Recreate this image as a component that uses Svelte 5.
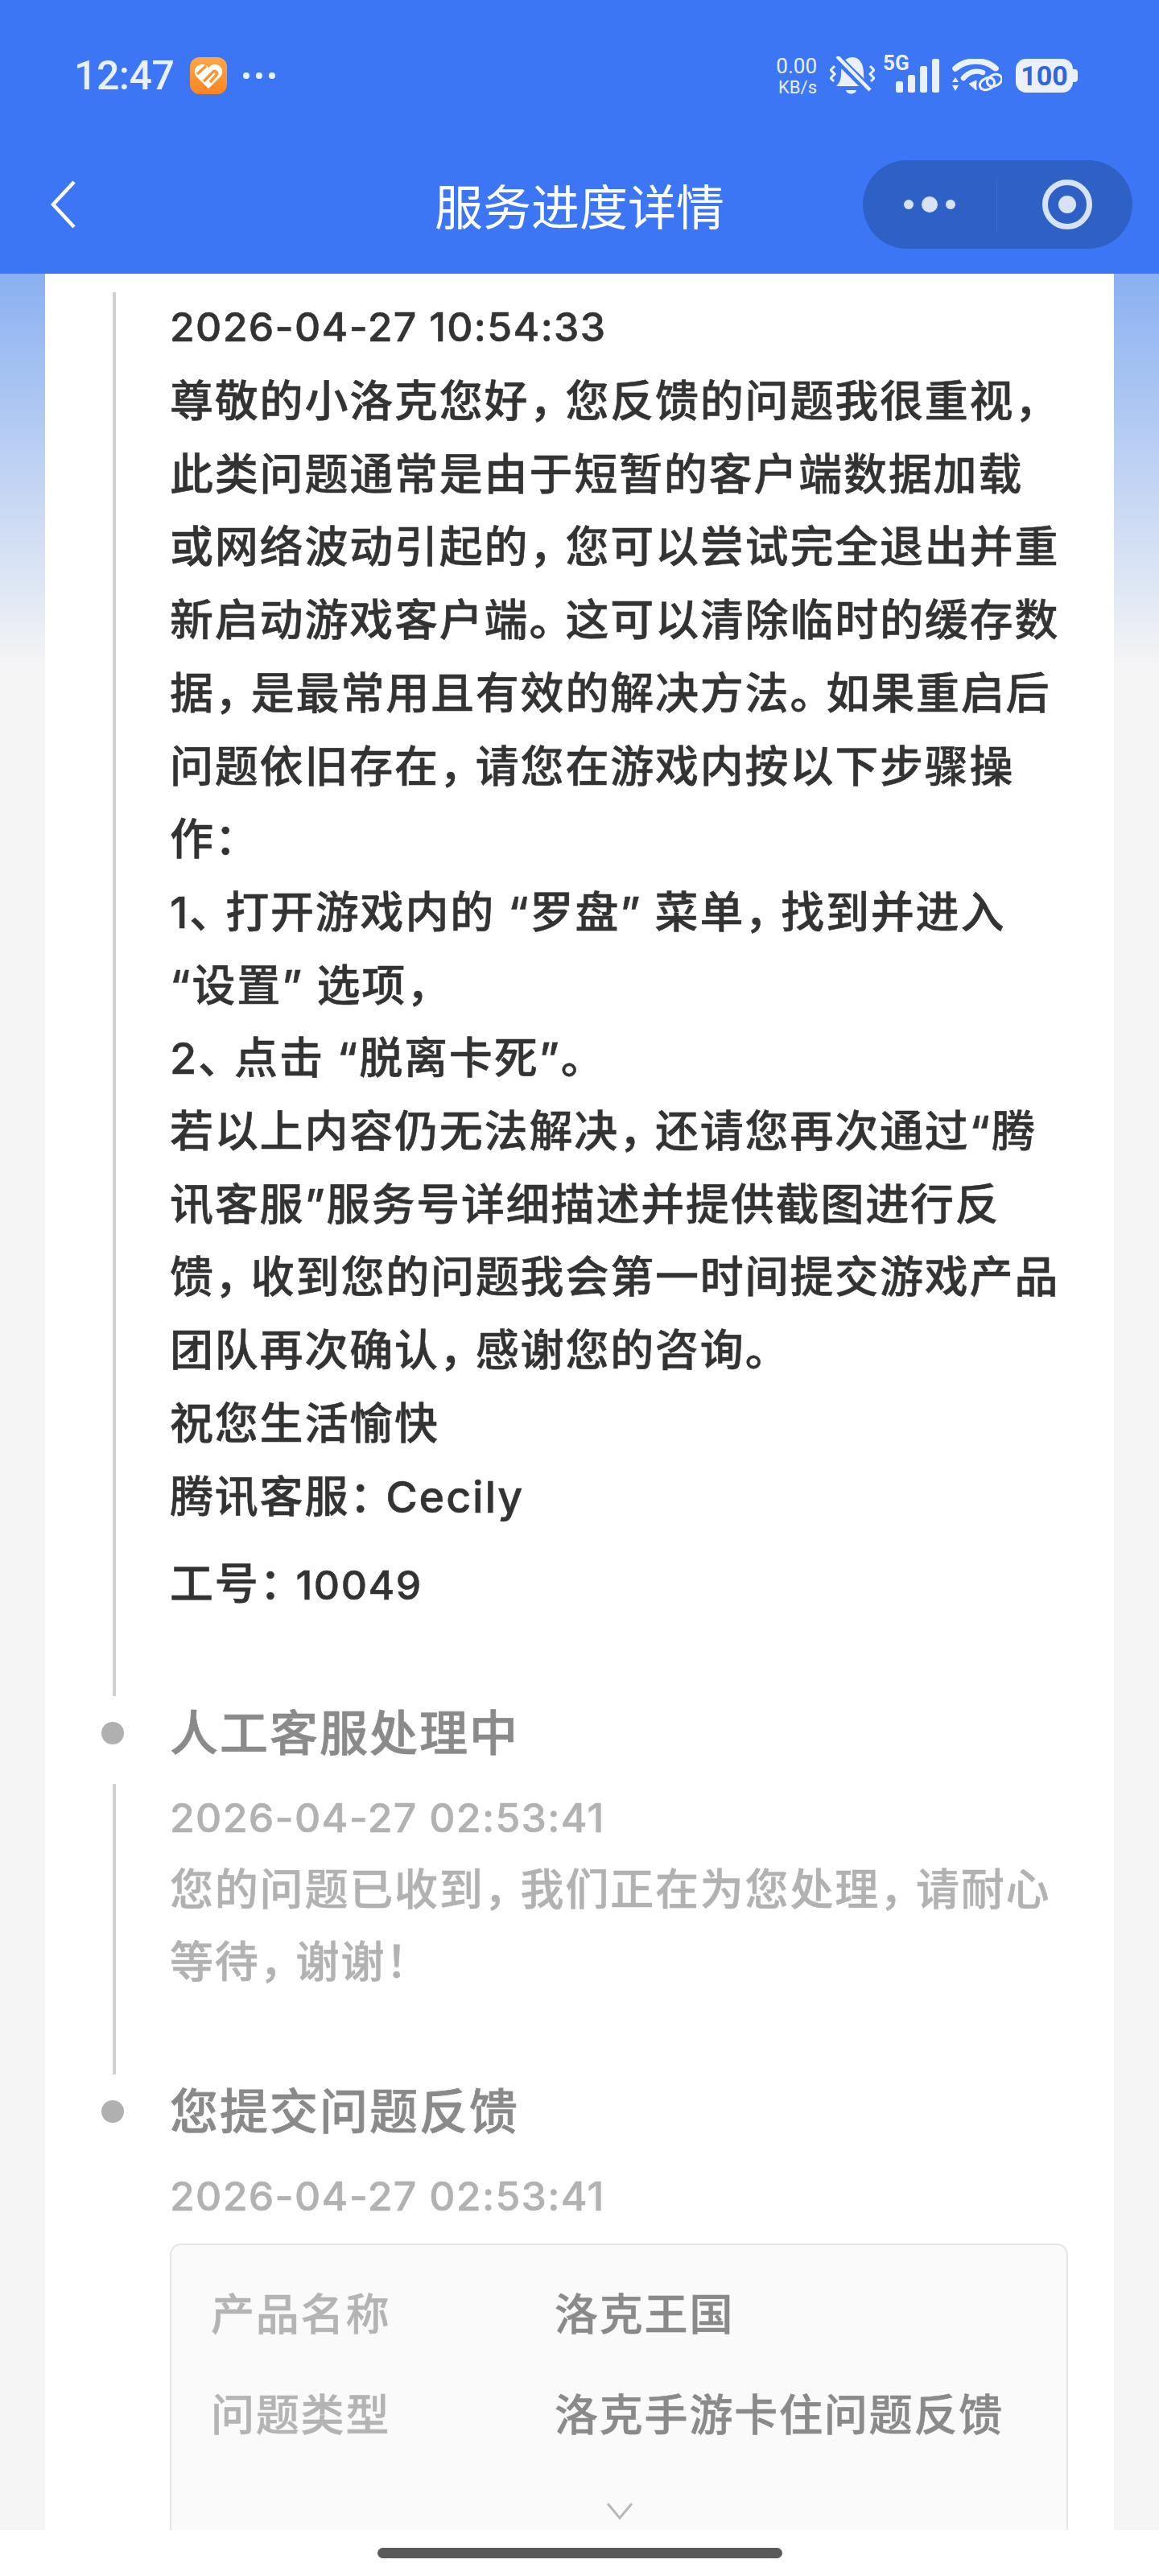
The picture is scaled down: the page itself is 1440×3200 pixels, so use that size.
<script lang="ts">
  // Ticket progress page inside a mini-program shell. Lines are listed by hand
  // because the reference wraps them with slightly narrower punctuation.
  const reply = [
    '尊敬的小洛克您好，您反馈的问题我很重视，',
    '此类问题通常是由于短暂的客户端数据加载',
    '或网络波动引起的，您可以尝试完全退出并重',
    '新启动游戏客户端。这可以清除临时的缓存数',
    '据，是最常用且有效的解决方法。如果重启后',
    '问题依旧存在，请您在游戏内按以下步骤操',
    '作：',
    '1、打开游戏内的 “罗盘” 菜单，找到并进入',
    '“设置” 选项，',
    '2、点击 “脱离卡死”。',
    '若以上内容仍无法解决，还请您再次通过“腾',
    '讯客服”服务号详细描述并提供截图进行反',
    '馈，收到您的问题我会第一时间提交游戏产品',
    '团队再次确认，感谢您的咨询。',
    '祝您生活愉快',
    '腾讯客服：Cecily',
  ];
  const handling = ['您的问题已收到，我们正在为您处理，请耐心', '等待，谢谢！'];
  const fields = [
    ['产品名称', '洛克王国'],
    ['问题类型', '洛克手游卡住问题反馈'],
  ];

  // split a line so CJK punctuation can be rendered a little tighter
  const parts = (line: string) => line.split(/([，。：！、])/).filter(Boolean);
  const isPunct = (s: string) => /^[，。：！、]$/.test(s);
</script>

{#snippet textLine(line)}
  <div class="line">{#each parts(line) as part}{#if isPunct(part)}<span class="punct">{part}</span>{:else}{part}{/if}{/each}</div>
{/snippet}

<div class="screen">
  <header class="top">
    <div class="status">
      <div class="status-left">
        <span class="clock">12:47</span>
        <svg class="app" viewBox="0 0 46 46" aria-hidden="true">
          <defs>
            <linearGradient id="appfill" x1="0" y1="0" x2="0" y2="1">
              <stop offset="0" stop-color="#ffa644" />
              <stop offset="1" stop-color="#fb8520" />
            </linearGradient>
          </defs>
          <rect width="46" height="46" rx="12" fill="url(#appfill)" />
          <path d="M23 39 L8 24 C3 18 7 9 15 9 C18 9 21 10.500 23 13 C25 10.500 28 9 31 9 C39 9 43 18 38 24 Z" fill="#fff" />
          <path d="M9 21 L20 11 M17 30 L29 18 C31 16 35 19 33 22 L25 31" fill="none" stroke="#fd9430" stroke-width="3.500" />
        </svg>
        <span class="more"><i></i><i></i><i></i></span>
      </div>
      <div class="status-right">
        <div class="net"><span>0.00</span><span class="unit">KB/s</span></div>
        <svg class="bell" viewBox="0 0 56 48" aria-hidden="true">
          <path d="M28 1 C38 1 42 11 42 21 C42 29 44 33 48 37 L8 37 C12 33 14 29 14 21 C14 11 18 1 28 1 Z" fill="#eaf1fd" />
          <path d="M20 42 H33 C32 48 21 48 20 42 Z" fill="#eaf1fd" />
          <path d="M8 1 L50 43" stroke="#3d76f5" stroke-width="11" />
          <path d="M9 0 L50 42" stroke="#eaf1fd" stroke-width="4.500" />
          <path d="M6 12 L1 17 L6 22 L1 27 L5 31 M50 12 L55 17 L50 22 L55 27 L51 31" fill="none" stroke="#eaf1fd" stroke-width="3" />
        </svg>
        <div class="cell">
          <span class="g5">5G</span>
          <svg class="bars" viewBox="0 0 54 42" aria-hidden="true">
            <rect x="0" y="28" width="9" height="14" rx="2.500" />
            <rect x="15" y="20" width="9" height="22" rx="2.500" />
            <rect x="30" y="9" width="9" height="33" rx="2.500" />
            <rect x="45" y="0" width="9" height="42" rx="2.500" />
          </svg>
        </div>
        <svg class="wifi" viewBox="0 0 63 42" aria-hidden="true">
          <path d="M5 12 C19 0 42 0 55 12" fill="none" stroke="#eaf1fd" stroke-width="7.500" stroke-linecap="round" />
          <path d="M15 24 C22 16 31 14 39 17" fill="none" stroke="#eaf1fd" stroke-width="6.500" stroke-linecap="round" />
          <path d="M22 31 L31 27 L31 39 Z" fill="#eaf1fd" stroke="#eaf1fd" stroke-linejoin="round" />
          <path d="M1 29 L5 23 L9 29 Z M1 33 L9 33 L5 40 Z" fill="#eaf1fd" />
          <g fill="none" transform="rotate(-25 49 29)">
            <ellipse cx="44" cy="29" rx="9.500" ry="7" stroke="#3d76f5" stroke-width="8" />
            <ellipse cx="54" cy="29" rx="9.500" ry="7" stroke="#3d76f5" stroke-width="8" />
            <ellipse cx="44" cy="29" rx="9.500" ry="7" stroke="#eaf1fd" stroke-width="3" />
            <ellipse cx="54" cy="29" rx="9.500" ry="7" stroke="#eaf1fd" stroke-width="3" />
          </g>
        </svg>
        <div class="battery"><span>100</span></div>
      </div>
    </div>

    <nav class="nav">
      <svg class="back" viewBox="0 0 32 60" aria-hidden="true">
        <path d="M30 2 L4 30 L30 58" fill="none" stroke="#fff" stroke-width="4.500" />
      </svg>
      <h1>服务进度详情</h1>
      <div class="capsule">
        <div class="cap-dots"><i></i><b></b><i></i></div>
        <div class="cap-rule"></div>
        <div class="cap-target"><span></span></div>
      </div>
    </nav>
  </header>

  <main class="page">
    <section class="card">
      <div class="body first">
        <div class="rail"><div class="stem"></div></div>
        <div class="content">
          <div class="date">2026-04-27 10:54:33</div>
          {#each reply as line}
            {@render textLine(line)}
          {/each}
          <div class="line staff">工号<span class="punct">：</span><span class="num">10049</span></div>
        </div>
      </div>

      <div class="head">
        <div class="rail"><span class="dot"></span></div>
        <h2>人工客服处理中</h2>
      </div>
      <div class="body second muted">
        <div class="rail"><div class="stem"></div></div>
        <div class="content">
          <div class="date">2026-04-27 02:53:41</div>
          {#each handling as line}
            {@render textLine(line)}
          {/each}
        </div>
      </div>

      <div class="head">
        <div class="rail"><span class="dot"></span></div>
        <h2>您提交问题反馈</h2>
      </div>
      <div class="body last muted">
        <div class="rail"></div>
        <div class="content">
          <div class="date">2026-04-27 02:53:41</div>
          <div class="box">
            {#each fields as [name, value]}
              <div class="field">
                <span class="name">{name}</span>
                <span class="value">{value}</span>
              </div>
            {/each}
            <svg class="chev" viewBox="0 0 34 22" aria-hidden="true">
              <path d="M2 2 L17 20 L32 2" fill="none" stroke="#b8b8b8" stroke-width="3" />
            </svg>
          </div>
        </div>
      </div>
    </section>
  </main>

  <footer class="home"><div class="handle"></div></footer>
</div>

<style>
  :global(body) { margin: 0; background: #f5f5f5; }

  .screen { width: 1440px; height: 3200px; display: flex; flex-direction: column; overflow: hidden;
            font-family: Inter, "Noto Sans CJK SC", sans-serif; }

  .top { height: 340px; flex-shrink: 0; background: #3d76f5; box-sizing: border-box; padding-top: 64px; }

  .status { height: 60px; display: flex; justify-content: space-between; align-items: center;
            padding: 0 97px 0 92px; color: #e8f0fd; }
  .status-left { display: flex; align-items: center; gap: 20px; }
  .clock { font-size: 50px; font-weight: 500; letter-spacing: -0.5px; font-family: Roboto, sans-serif; }
  .app { width: 46px; height: 46px; }
  .more { display: flex; gap: 8px; }
  .more i { width: 8px; height: 8px; border-radius: 50%; background: #e8f0fd; }
  .status-right { display: flex; align-items: center; }
  .net { display: flex; flex-direction: column; align-items: flex-end; font-size: 26px; line-height: 30px;
         width: 50px; font-family: Roboto, sans-serif; }
  .net .unit { font-size: 22px; line-height: 24px; }
  .bell { width: 56px; height: 48px; margin-left: 16px; }
  .cell { position: relative; width: 70px; height: 60px; margin-left: 10px; display: flex; align-items: flex-end;
          justify-content: flex-end; padding-bottom: 9px; box-sizing: border-box; }
  .g5 { position: absolute; left: 0; top: 2px; font-size: 26px; font-weight: 700; line-height: 24px;
        font-family: Roboto, sans-serif; }
  .bars { width: 54px; height: 42px; fill: #eaf1fd; }
  .wifi { width: 63px; height: 42px; margin-left: 15px; }
  .battery { position: relative; width: 71px; height: 42px; margin-left: 17px; margin-right: 10px; border-radius: 13px;
             background: #eaf1fd; color: #2f67d8; display: flex; align-items: center; justify-content: center;
             font-size: 34px; font-weight: 700; font-family: Roboto, sans-serif; }
  .battery::after { content: ''; position: absolute; right: -6px; top: 13px; width: 6px; height: 16px;
                    border-radius: 0 4px 4px 0; background: #eaf1fd; }

  .nav { margin-top: 75px; height: 110px; position: relative; display: flex; align-items: center;
         justify-content: space-between; padding: 0 33px 0 62px; }
  .back { width: 32px; height: 60px; }
  .nav h1 { position: absolute; left: 0; right: 0; top: 0; margin: 0; text-align: center; font-size: 60px; font-weight: 400;
            color: #fff; line-height: 118px; pointer-events: none; }
  .capsule { width: 335px; height: 110px; border-radius: 55px; background: #2f60c5; display: flex; align-items: center;
             color: #d6e2f6; }
  .cap-dots { width: 166px; display: flex; justify-content: center; align-items: center; gap: 10px; }
  .cap-dots i { width: 12px; height: 12px; border-radius: 50%; background: #d6e2f6; }
  .cap-dots b { width: 20px; height: 20px; border-radius: 50%; background: #d6e2f6; }
  .cap-rule { width: 1px; height: 68px; background: #3a6bd0; }
  .cap-target { flex: 1; display: flex; justify-content: center; padding-left: 6px; }
  .cap-target span { width: 62px; height: 62px; box-sizing: border-box; border: 7px solid #d6e2f6; border-radius: 50%;
                     display: flex; align-items: center; justify-content: center; }
  .cap-target span::before { content: ''; width: 22px; height: 22px; border-radius: 50%; background: #d6e2f6; }

  .page { flex: 1; min-height: 0; overflow: hidden; padding: 0 56px;
          background: linear-gradient(#8ab0f1 0, #f5f5f5 490px); }
  .card { background: #fff; min-height: 100%; padding: 23px 56px 0 70px; box-sizing: border-box; }

  .body { display: flex; }
  .rail { width: 28px; margin-right: 57px; flex-shrink: 0; }
  .stem { width: 4px; height: 100%; margin-left: 14px; background: #d0d0d0; }
  .content { flex: 1; min-width: 0; font-size: 54px; font-weight: 500; line-height: 90px; letter-spacing: 1.8px; color: #333;
             white-space: nowrap; -webkit-text-stroke: 0.5px currentColor; }

  .date { font-size: 50px; line-height: 84px; margin-bottom: 3px; letter-spacing: 1.3px; }
  .punct { letter-spacing: -9px; }
  .num { font-size: 50px; letter-spacing: 1.5px; }
  .staff { margin-top: 18px; }
  .first .content { padding-bottom: 92px; line-height: 90.7px; }
  .first .date { line-height: 86px; margin-bottom: 5px; }
  .second .content { padding-bottom: 94px; }

  .head { display: flex; align-items: center; height: 92px; margin-bottom: 17px; }
  .dot { display: block; width: 28px; height: 28px; border-radius: 50%; background: #b0b0b0; }
  .head h2 { margin: 0; font-size: 60px; font-weight: 500; letter-spacing: 2px; color: #8a8a8a; line-height: 92px;
             -webkit-text-stroke: 0.7px currentColor; }

  .muted .content { color: #b2b2b2; }

  .last .date { margin-bottom: 17px; }
  .box { width: 1116px; box-sizing: border-box; border: 2px solid #e5e5e5; border-radius: 14px; background: #fafafa;
         padding: 25px 49px 120px; }
  .field { display: flex; height: 125px; align-items: center; }
  .name { width: 427px; color: #b4b4b4; }
  .value { color: #8a8a8a; }
  .chev { display: block; width: 34px; height: 22px; margin: 44px 0 0 491px; -webkit-text-stroke: 0; }

  .home { height: 57px; flex-shrink: 0; background: #fff; display: flex; align-items: center; justify-content: center; }
  .handle { width: 503px; height: 13px; border-radius: 7px; background: #5a5a5a; }
</style>
